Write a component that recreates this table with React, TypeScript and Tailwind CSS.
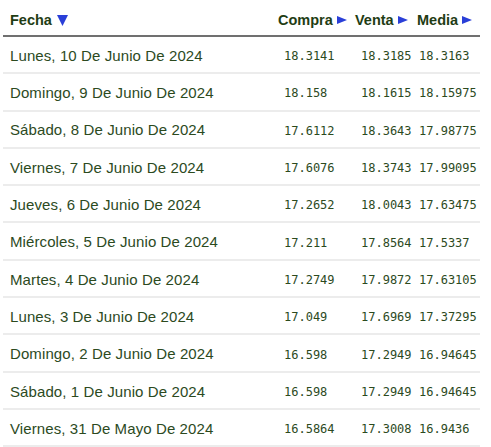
const rows = [
  ["Lunes, 10 De Junio De 2024", "18.3141", "18.3185", "18.3163"],
  ["Domingo, 9 De Junio De 2024", "18.158", "18.1615", "18.15975"],
  ["Sábado, 8 De Junio De 2024", "17.6112", "18.3643", "17.98775"],
  ["Viernes, 7 De Junio De 2024", "17.6076", "18.3743", "17.99095"],
  ["Jueves, 6 De Junio De 2024", "17.2652", "18.0043", "17.63475"],
  ["Miércoles, 5 De Junio De 2024", "17.211", "17.8564", "17.5337"],
  ["Martes, 4 De Junio De 2024", "17.2749", "17.9872", "17.63105"],
  ["Lunes, 3 De Junio De 2024", "17.049", "17.6969", "17.37295"],
  ["Domingo, 2 De Junio De 2024", "16.598", "17.2949", "16.94645"],
  ["Sábado, 1 De Junio De 2024", "16.598", "17.2949", "16.94645"],
  ["Viernes, 31 De Mayo De 2024", "16.5864", "17.3008", "16.9436"],
]

const cols = "grid grid-cols-[274px_77px_59px_67px] items-center"

function Right() {
  return (
    <svg width="10" height="8" viewBox="0 0 10 8" className="inline-block ml-[4px] align-[1px]">
      <path d="M0 0 L10 4 L0 8 Z" fill="#2a3fd8" />
    </svg>
  )
}

function Down() {
  return (
    <svg width="11" height="11" viewBox="0 0 11 11" className="inline-block ml-[5px] align-[-1px]">
      <path d="M0 0 L11 0 L5.5 11 Z" fill="#2a3fd8" />
    </svg>
  )
}

export default function App() {
  return (
    <div className="w-[491px] h-[447px] overflow-hidden bg-white pl-[3px] font-['Liberation_Sans',Arial,sans-serif]">
      <div className="w-[477px]">
        <div className={`${cols} h-[37px] border-b-2 border-[#707070] text-[14.5px] font-bold text-[#1f3d14] pt-[6px]`}>
          <div className="pl-[7px]">
            Fecha<Down />
          </div>
          <div className="pl-[1px] whitespace-nowrap">
            Compra<Right />
          </div>
          <div className="pl-[1px] whitespace-nowrap">
            Venta<Right />
          </div>
          <div className="pl-[4px] whitespace-nowrap">
            Media<Right />
          </div>
        </div>
        {rows.map((r) => (
          <div
            key={r[0]}
            className={`${cols} h-[37.3px] border-b-2 border-[#ececec] text-[#2c4a1e] pt-[3px]`}
          >
            <div className="pl-[7px] text-[15px] tracking-[0.1px]">{r[0]}</div>
            <div className="pl-[7px] text-[12px] font-['DejaVu_Sans_Mono',monospace]">{r[1]}</div>
            <div className="pl-[7px] text-[12px] font-['DejaVu_Sans_Mono',monospace]">{r[2]}</div>
            <div className="pl-[6px] text-[12px] font-['DejaVu_Sans_Mono',monospace]">{r[3]}</div>
          </div>
        ))}
      </div>
    </div>
  )
}
